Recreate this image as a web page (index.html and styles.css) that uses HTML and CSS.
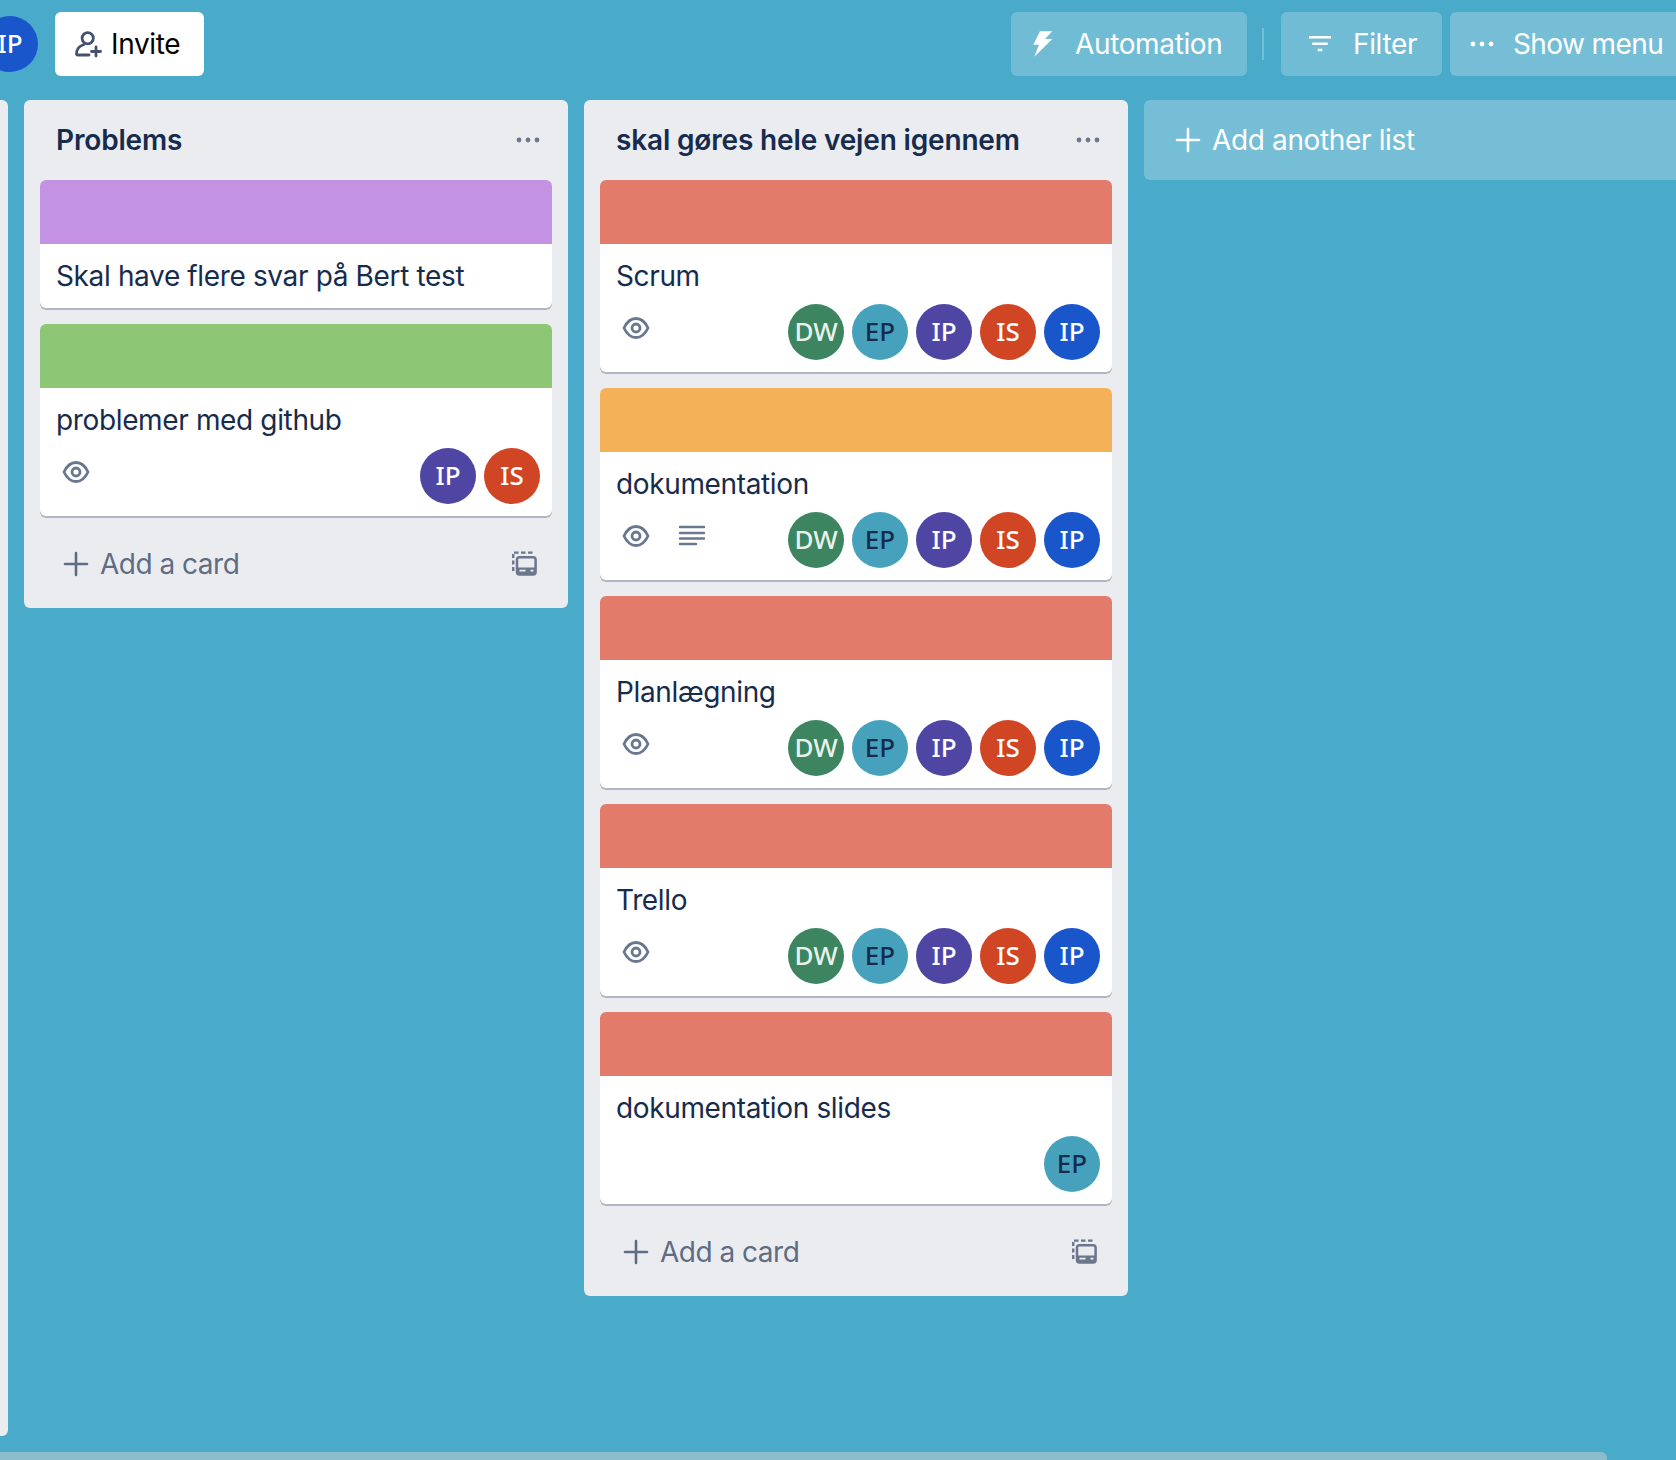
FILE: index.html
```html
<!DOCTYPE html>
<html lang="en">
<head>
<meta charset="utf-8">
<title>Board</title>
<link rel="stylesheet" href="styles.css">
</head>
<body>
<svg class="sprites" width="0" height="0" aria-hidden="true">
  <symbol id="eye" viewBox="0 0 32 32"><path d="M4 16c3-6.500 7-9.500 12-9.500s9 3 12 9.500c-3 6.500-7 9.500-12 9.500S7 22.500 4 16z" fill="none" stroke="currentColor" stroke-width="2.800" stroke-linejoin="round"/><circle cx="16" cy="16" r="4" fill="none" stroke="currentColor" stroke-width="2.800"/></symbol>
  <symbol id="desc" viewBox="0 0 32 32"><path d="M4 7h24M4 13h24M4 18.500h24M4 24h16" fill="none" stroke="currentColor" stroke-width="2.400" stroke-linecap="round"/></symbol>
  <symbol id="plus" viewBox="0 0 32 32"><path d="M16 5v22M5 16h22" fill="none" stroke="currentColor" stroke-width="2.600" stroke-linecap="round"/></symbol>
  <symbol id="tmpl" viewBox="0 0 32 32"><path d="M5.200 6v19" fill="none" stroke="currentColor" stroke-width="2.400" stroke-dasharray="4 2.500"/><path d="M6 4.600h19" fill="none" stroke="currentColor" stroke-width="2.400" stroke-dasharray="4.500 2.500"/><rect x="9" y="9.200" width="18.600" height="17.400" rx="2.500" fill="none" stroke="currentColor" stroke-width="2.500"/><path fill="currentColor" fill-rule="evenodd" d="M9 19.500h18.600v7.100H9zM11.500 21.700v1.900h6v-1.900zM22.500 21.700v1.900h3v-1.900z"/></symbol>
  <symbol id="dots" viewBox="0 0 32 32"><circle cx="7" cy="16" r="2.400" fill="currentColor"/><circle cx="16" cy="16" r="2.400" fill="currentColor"/><circle cx="25" cy="16" r="2.400" fill="currentColor"/></symbol>
</svg>
<header class="topbar">
  <span class="avatar blue top-avatar">IP</span>
  <button class="btn btn-invite"><svg class="icon" viewBox="0 0 32 32"><circle cx="15.700" cy="10.300" r="5.600" fill="none" stroke="#42526e" stroke-width="2.800"/><path d="M12 16.500C7.500 18 4.500 21.500 4.500 25.500q0 1.500 1.500 1.500h11" fill="none" stroke="#42526e" stroke-width="2.800" stroke-linecap="round"/><path d="M24 19v9M19.500 23.500h9" fill="none" stroke="#42526e" stroke-width="2.800" stroke-linecap="round"/></svg>Invite</button>
  <div class="board-actions">
    <button class="btn btn-ghost btn-automation"><svg class="icon" viewBox="0 0 32 32"><path fill="#fff" d="M13 3.300 6.300 16.700H12L7.300 28.700 25.300 11H18l7.300-7.700z"/></svg>Automation</button>
    <span class="divider"></span>
    <button class="btn btn-ghost btn-filter"><svg class="icon" viewBox="0 0 32 32"><path d="M5 9.300h22M8.300 15.700h15.400M13.700 22h4.600" fill="none" stroke="#fff" stroke-width="2.500"/></svg>Filter</button>
    <button class="btn btn-ghost btn-menu"><svg class="icon"><use href="#dots"/></svg>Show menu</button>
  </div>
</header>
<main class="board">
  <div class="list-edge"></div>

  <section class="list">
    <div class="list-head"><h2>Problems</h2><svg class="icon dots"><use href="#dots"/></svg></div>
    <article class="card">
      <div class="cover purple"></div>
      <div class="card-body"><p class="title">Skal have flere svar på Bert test</p></div>
    </article>
    <article class="card">
      <div class="cover green"></div>
      <div class="card-body">
        <p class="title">problemer med github</p>
        <div class="meta">
          <div class="badges"><svg class="icon"><use href="#eye"/></svg></div>
          <div class="members"><span class="avatar purple-dark">IP</span><span class="avatar red">IS</span></div>
        </div>
      </div>
    </article>
    <div class="composer"><svg class="icon"><use href="#plus"/></svg><span>Add a card</span><svg class="icon tmpl"><use href="#tmpl"/></svg></div>
  </section>

  <section class="list">
    <div class="list-head"><h2>skal gøres hele vejen igennem</h2><svg class="icon dots"><use href="#dots"/></svg></div>
    <article class="card">
      <div class="cover salmon"></div>
      <div class="card-body">
        <p class="title">Scrum</p>
        <div class="meta">
          <div class="badges"><svg class="icon"><use href="#eye"/></svg></div>
          <div class="members"><span class="avatar green-dark">DW</span><span class="avatar teal">EP</span><span class="avatar purple-dark">IP</span><span class="avatar red">IS</span><span class="avatar blue">IP</span></div>
        </div>
      </div>
    </article>
    <article class="card">
      <div class="cover orange"></div>
      <div class="card-body">
        <p class="title">dokumentation</p>
        <div class="meta">
          <div class="badges"><svg class="icon"><use href="#eye"/></svg><svg class="icon"><use href="#desc"/></svg></div>
          <div class="members"><span class="avatar green-dark">DW</span><span class="avatar teal">EP</span><span class="avatar purple-dark">IP</span><span class="avatar red">IS</span><span class="avatar blue">IP</span></div>
        </div>
      </div>
    </article>
    <article class="card">
      <div class="cover salmon"></div>
      <div class="card-body">
        <p class="title">Planlægning</p>
        <div class="meta">
          <div class="badges"><svg class="icon"><use href="#eye"/></svg></div>
          <div class="members"><span class="avatar green-dark">DW</span><span class="avatar teal">EP</span><span class="avatar purple-dark">IP</span><span class="avatar red">IS</span><span class="avatar blue">IP</span></div>
        </div>
      </div>
    </article>
    <article class="card">
      <div class="cover salmon"></div>
      <div class="card-body">
        <p class="title">Trello</p>
        <div class="meta">
          <div class="badges"><svg class="icon"><use href="#eye"/></svg></div>
          <div class="members"><span class="avatar green-dark">DW</span><span class="avatar teal">EP</span><span class="avatar purple-dark">IP</span><span class="avatar red">IS</span><span class="avatar blue">IP</span></div>
        </div>
      </div>
    </article>
    <article class="card">
      <div class="cover salmon"></div>
      <div class="card-body">
        <p class="title">dokumentation slides</p>
        <div class="meta">
          <div class="badges"></div>
          <div class="members"><span class="avatar teal">EP</span></div>
        </div>
      </div>
    </article>
    <div class="composer"><svg class="icon"><use href="#plus"/></svg><span>Add a card</span><svg class="icon tmpl"><use href="#tmpl"/></svg></div>
  </section>

  <button class="add-list"><svg class="icon"><use href="#plus"/></svg>Add another list</button>
</main>
<div class="scroll-thumb"></div>
</body>
</html>
```
FILE: styles.css
```css
* { box-sizing: border-box; }
html, body { height: 100%; }
body {
  margin: 0;
  height: 1460px;
  overflow: hidden;
  background: #4aaaca;
  color: #172b4d;
  font-family: Inter, "Liberation Sans", sans-serif;
  font-size: 28px;
  letter-spacing: -0.36px;
  display: flex;
  flex-direction: column;
}
.sprites { position: absolute; }
.icon { width: 32px; height: 32px; flex: none; display: block; }
h2, p { margin: 0; }

.topbar {
  height: 88px;
  flex: none;
  padding-top: 12px;
  display: flex;
  align-items: flex-start;
  margin-left: -18px;
  width: 1720px;
}
.btn {
  height: 64px;
  border: 0;
  border-radius: 6px;
  font: inherit;
  letter-spacing: inherit;
  font-size: 28px;
  display: flex;
  align-items: center;
  padding: 0;
  white-space: nowrap;
}
.btn-invite {
  width: 149px;
  margin-left: 17px;
  padding-left: 17px;
  background: #fff;
  color: #000;
  gap: 7px;
}
.board-actions {
  margin-left: 807px;
  display: flex;
  align-items: center;
}
.btn-ghost { background: rgba(255, 255, 255, .22); color: #fff; }
.btn-automation { width: 236px; padding-left: 16px; gap: 16px; }
.divider { width: 2px; height: 32px; margin: 0 17px 0 15px; background: rgba(255, 255, 255, .25); }
.btn-filter { width: 161px; padding-left: 23px; gap: 17px; }
.btn-menu { width: 238px; margin-left: 8px; padding-left: 16px; gap: 15px; letter-spacing: -0.6px; background: rgba(255, 255, 255, .24); }

.avatar {
  width: 56px;
  height: 56px;
  flex: none;
  border-radius: 50%;
  display: flex;
  align-items: center;
  justify-content: center;
  padding-bottom: 2px;
  color: #fff;
  font-family: "Noto Sans", sans-serif;
  font-weight: 500;
  font-size: 26px;
  letter-spacing: 0;
}
.top-avatar { margin-top: 4px; }
.blue { background: #1a56cb; }
.green-dark { background: #3c8560; color: #e6f2ea; }
.teal { background: #46a2bc; color: #172b4d; }
.purple-dark { background: #4f46a3; }
.red { background: #d04624; }

.board {
  flex: 1;
  display: flex;
  align-items: flex-start;
  gap: 16px;
  padding-top: 12px;
  width: 1720px;
}
.list-edge {
  width: 8px;
  height: 1336px;
  flex: none;
  background: #ebecf0;
  border-radius: 0 6px 6px 0;
}
.list {
  width: 544px;
  flex: none;
  background: #ebecf0;
  border-radius: 6px;
  padding: 0 16px;
}
.list-head {
  height: 80px;
  padding: 0 12px 0 16px;
  display: flex;
  align-items: center;
  justify-content: space-between;
  margin-right: -12px;
}
.list-head h2 { font-size: 28px; font-weight: 600; line-height: 40px; letter-spacing: -0.16px; }
.dots { color: #6b778c; margin-right: 8px; }
.card {
  background: #fff;
  border-radius: 6px;
  box-shadow: 0 2px 0 #b0b6c4;
  margin-bottom: 16px;
  overflow: hidden;
}
.cover { height: 64px; }
.purple { background: #c392e2; }
.green { background: #8dc674; }
.salmon { background: #e27b69; }
.orange { background: #f5b157; }
.card-body { padding: 12px 12px 12px 16px; }
.title { line-height: 40px; font-size: 28px; }
.meta {
  margin-top: 8px;
  display: flex;
  justify-content: space-between;
}
.badges {
  height: 48px;
  padding-left: 4px;
  display: flex;
  align-items: center;
  gap: 24px;
  color: #6b778c;
}
.members { display: flex; gap: 8px; }

.composer {
  height: 76px;
  padding: 0 12px 12px 20px;
  display: flex;
  align-items: center;
  color: #5e6c84;
  gap: 8px;
  letter-spacing: -0.5px;
}
.composer span { flex: 1; }
.tmpl { color: #6b778c; }

.add-list {
  width: 544px;
  height: 80px;
  flex: none;
  border: 0;
  border-radius: 6px;
  background: rgba(255, 255, 255, .24);
  color: #fff;
  font: inherit;
  letter-spacing: inherit;
  font-size: 28px;
  display: flex;
  align-items: center;
  padding: 0 0 0 28px;
  gap: 8px;
}
.scroll-thumb {
  position: absolute;
  left: 0;
  top: 1452px;
  width: 1607px;
  height: 8px;
  background: #8cbdcc;
  border-radius: 0 6px 0 0;
}
```
